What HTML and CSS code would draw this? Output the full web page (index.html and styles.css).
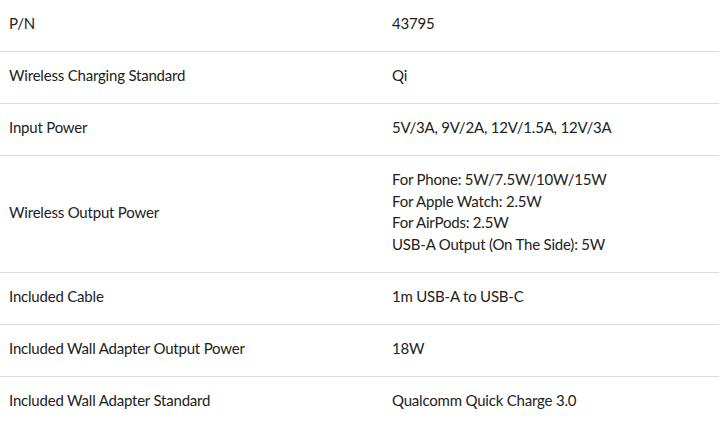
FILE: index.html
```html
<!DOCTYPE html>
<html>
<head>
<meta charset="utf-8">
<link rel="stylesheet" href="styles.css">
</head>
<body>
<table class="specs">
  <tr><td class="label">P/N</td><td class="value">43795</td></tr>
  <tr><td class="label">Wireless Charging Standard</td><td class="value">Qi</td></tr>
  <tr><td class="label">Input Power</td><td class="value">5V/3A, 9V/2A, 12V/1.5A, 12V/3A</td></tr>
  <tr><td class="label">Wireless Output Power</td><td class="value">For Phone: 5W/7.5W/10W/15W<br>For Apple Watch: 2.5W<br>For AirPods: 2.5W<br>USB-A Output (On The Side): 5W</td></tr>
  <tr><td class="label">Included Cable</td><td class="value">1m USB-A to USB-C</td></tr>
  <tr><td class="label">Included Wall Adapter Output Power</td><td class="value">18W</td></tr>
  <tr class="last"><td class="label">Included Wall Adapter Standard</td><td class="value">Qualcomm Quick Charge 3.0</td></tr>
</table>
</body>
</html>
```
FILE: styles.css
```css
html, body {
  margin: 0;
  padding: 0;
  background: #ffffff;
}
body {
  font-family: Lato, "Open Sans", sans-serif;
  font-size: 15px;
  letter-spacing: -0.2px;
  color: #222222;
}
.specs {
  width: 719px;
  border-collapse: collapse;
}
.specs td {
  padding: 13px 9px 16.34px;
  line-height: 21.67px;
  vertical-align: middle;
  border-bottom: 1px solid #dcdcdc;
}
.specs .label {
  width: 365px;
}
.specs tr.last td {
  border-bottom: none;
}
```
